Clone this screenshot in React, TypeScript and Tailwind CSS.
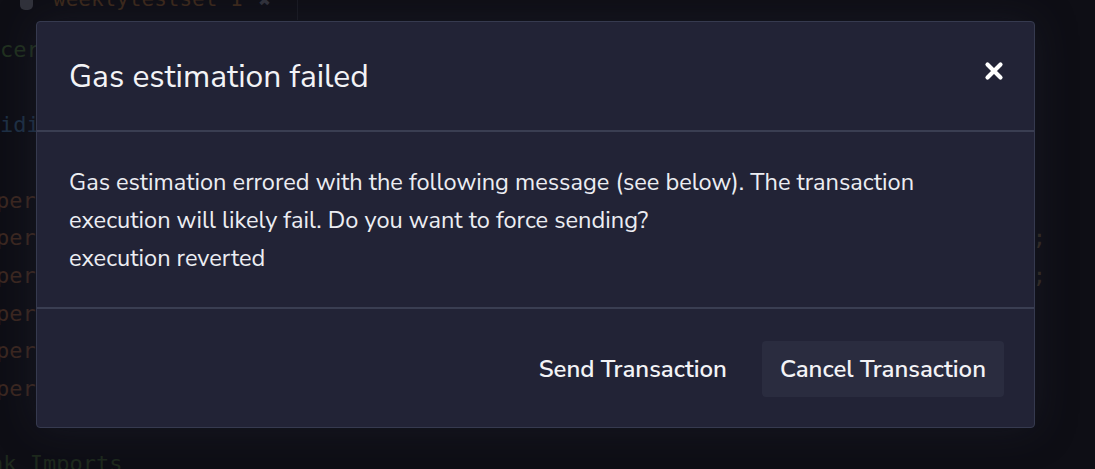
import React from "react";

const mono = { fontFamily: '"DejaVu Sans Mono", "Liberation Mono", monospace' };

type Line = { left: string; color: string; right?: string; indent?: string };

const lines: Line[] = [
  { left: "cer", color: "text-[#2f4a27]" },
  { left: "", color: "" },
  { left: "idi", color: "text-[#2b4866]" },
  { left: "", color: "" },
  { left: "per", color: "text-[#5c3a29]", indent: "ml-[-4px]" },
  { left: "per", color: "text-[#5c3a29]", right: ";", indent: "ml-[-4px]" },
  { left: "per", color: "text-[#5c3a29]", right: ";", indent: "ml-[-4px]" },
  { left: "per", color: "text-[#5c3a29]", indent: "ml-[-4px]" },
  { left: "per", color: "text-[#5c3a29]", indent: "ml-[-4px]" },
  { left: "per", color: "text-[#5c3a29]", indent: "ml-[-4px]" },
  { left: "", color: "" },
  { left: "nk Imports", color: "text-[#2a3d24]", indent: "ml-[-10px]" },
];

function CodeBg() {
  return (
    <div className="absolute inset-0 flex flex-col text-[22px]" style={mono}>
      <div className="flex h-[20px] w-[298px] shrink-0 items-start border-r border-[#22232c] pl-[20px]">
        <div className="h-[10px] w-[13px] rounded-b-[5px] bg-[#4a4b55]" />
        <div className="ml-[20px] mt-[-14px] text-[21px] leading-[26px] text-[#5e3d20]">weeklytestset 1</div>
        <div className="ml-[16px] mt-[-12px] text-[20px] leading-[24px] font-bold text-[#4a4b55]">✖</div>
      </div>
      <div className="flex shrink-0 flex-col pt-[11px]">
        {lines.map((l, i) => (
          <div key={i} className="flex h-[37.7px] w-[1046px] shrink-0 items-center justify-between leading-none">
            <span className={`${l.color} ${l.indent ?? ""}`}>{l.left}</span>
            {l.right ? <span className="text-[#4f4030]">{l.right}</span> : null}
          </div>
        ))}
      </div>
    </div>
  );
}

export default function App() {
  const font = { fontFamily: '"Nunito Sans", Lato, "Open Sans", sans-serif' };
  return (
    <div className="relative h-[469px] w-[1095px] overflow-hidden bg-[#0f1017]">
      <CodeBg />
      <div className="absolute inset-0 bg-[#0c0d14]/40" />
      <div className="relative pl-[36px] pt-[21px]" style={font}>
        <div className="w-[999px] rounded-[4px] border border-[#363a4f] bg-[#222336] text-white shadow-[0_0_40px_rgba(40,42,60,0.35)]">
          <div className="flex h-[110px] items-center justify-between border-b-2 border-[#3a3e52] pl-[32px] pr-[30px]">
            <div className="pt-[1px] text-[31.8px] font-normal text-[#f3f3f6]">Gas estimation failed</div>
            <svg width="20" height="20" viewBox="0 0 20 20" className="mb-[10px]">
              <path d="M3.5 3.5 L16.5 16.5 M16.5 3.5 L3.5 16.5" stroke="#ffffff" strokeWidth="4.2" strokeLinecap="round" />
            </svg>
          </div>
          <div className="border-b-2 border-[#3a3e52] px-[32px] pt-[31px] pb-[30px] text-[23.6px] leading-[38px] text-[#ecedf2]">
            <div>Gas estimation errored with the following message (see below). The transaction execution will likely fail. Do you want to force sending?</div>
            <div>execution reverted</div>
          </div>
          <div className="flex h-[118px] items-center justify-end gap-[17px] pr-[30px] pt-[2px]">
            <button className="h-[56px] rounded-[4px] px-[18px] text-[24px] font-semibold text-[#f3f3f6]">
              Send Transaction
            </button>
            <button className="h-[56px] rounded-[4px] bg-[#2a2c3f] px-[18px] text-[24px] font-semibold text-[#f3f3f6]">
              Cancel Transaction
            </button>
          </div>
        </div>
      </div>
    </div>
  );
}
